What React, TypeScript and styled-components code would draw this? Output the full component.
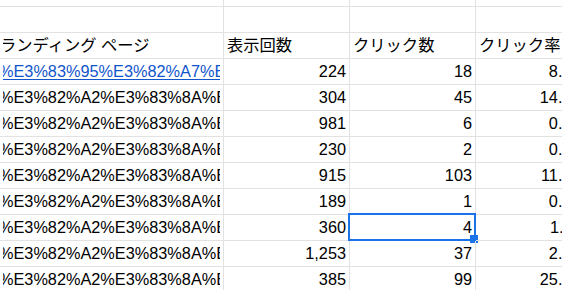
import React from 'react'
import styled, { createGlobalStyle } from 'styled-components'

const GlobalStyle = createGlobalStyle`
  html, body {
    margin: 0;
    padding: 0;
    background: #fff;
    overflow: hidden;
  }
`

const Sheet = styled.div`
  width: 562px;
  height: 290px;
  overflow: hidden;
  font-family: 'Liberation Sans', Arial, 'Noto Sans CJK JP', sans-serif;
  font-size: 16.3px;
  color: #000;
`

const Grid = styled.div`
  display: grid;
  grid-template-columns: 224px 126px 126px 123px;
  width: 599px;
`

const Cell = styled.div<{ $align?: 'left' | 'right'; $short?: boolean; $indent?: number }>`
  position: relative;
  box-sizing: border-box;
  height: ${p => (p.$short ? '7px' : '26px')};
  line-height: 25px;
  padding: 0 3px;
  border-right: 1px solid #e2e2e2;
  border-bottom: 1px solid #e2e2e2;
  text-align: ${p => p.$align || 'left'};
  white-space: nowrap;
  overflow: ${p => (p.$short ? 'hidden' : 'visible')};
  text-indent: ${p => (p.$indent ? `${p.$indent}px` : '0')};
`

const Clip = styled.div`
  overflow: hidden;
  height: 25px;
`

const Link = styled.span`
  color: #1155cc;
  text-decoration: underline;
  text-underline-offset: 2px;
`

const Selection = styled.div`
  position: absolute;
  top: -2px;
  left: -2px;
  right: -1px;
  bottom: -1px;
  border: 2px solid #1a73e8;
  pointer-events: none;
`

const Handle = styled.div`
  position: absolute;
  right: -4px;
  bottom: -4px;
  width: 8px;
  height: 8px;
  background: #1a73e8;
`

type Row = {
  url: string
  link?: boolean
  views: string
  clicks: string
  ctr: string
  selected?: boolean
}

const rows: Row[] = [
  { url: '%E3%83%95%E3%82%A7%E3%82%A2%E3%83%AA', link: true, views: '224', clicks: '18', ctr: '8.04%' },
  { url: '%E3%82%A2%E3%83%8A%E3%83%AA%E3%83%86', views: '304', clicks: '45', ctr: '14.80%' },
  { url: '%E3%82%A2%E3%83%8A%E3%83%AA%E3%83%86', views: '981', clicks: '6', ctr: '0.61%' },
  { url: '%E3%82%A2%E3%83%8A%E3%83%AA%E3%83%86', views: '230', clicks: '2', ctr: '0.87%' },
  { url: '%E3%82%A2%E3%83%8A%E3%83%AA%E3%83%86', views: '915', clicks: '103', ctr: '11.26%' },
  { url: '%E3%82%A2%E3%83%8A%E3%83%AA%E3%83%86', views: '189', clicks: '1', ctr: '0.53%' },
  { url: '%E3%82%A2%E3%83%8A%E3%83%AA%E3%83%86', views: '360', clicks: '4', ctr: '1.11%', selected: true },
  { url: '%E3%82%A2%E3%83%8A%E3%83%AA%E3%83%86', views: '1,253', clicks: '37', ctr: '2.95%' },
  { url: '%E3%82%A2%E3%83%8A%E3%83%AA%E3%83%86', views: '385', clicks: '99', ctr: '25.71%' },
]

const App = () => {
  return (
    <>
      <GlobalStyle />
      <Sheet>
        <Grid>
          {[0, 1, 2, 3].map(i => <Cell key={`top${i}`} $short />)}
          {[0, 1, 2, 3].map(i => <Cell key={`empty${i}`} />)}

          <Cell $indent={-3}><Clip>ランディング ページ</Clip></Cell>
          <Cell><Clip>表示回数</Clip></Cell>
          <Cell><Clip>クリック数</Clip></Cell>
          <Cell><Clip>クリック率</Clip></Cell>

          {rows.map((r, i) => (
            <React.Fragment key={i}>
              <Cell $indent={-4}>
                <Clip>{r.link ? <Link>{r.url}</Link> : r.url}</Clip>
              </Cell>
              <Cell $align="right">{r.views}</Cell>
              <Cell $align="right">
                {r.clicks}
                {r.selected && (
                  <Selection>
                    <Handle />
                  </Selection>
                )}
              </Cell>
              <Cell $align="right">{r.ctr}</Cell>
            </React.Fragment>
          ))}
        </Grid>
      </Sheet>
    </>
  )
}

export default App
